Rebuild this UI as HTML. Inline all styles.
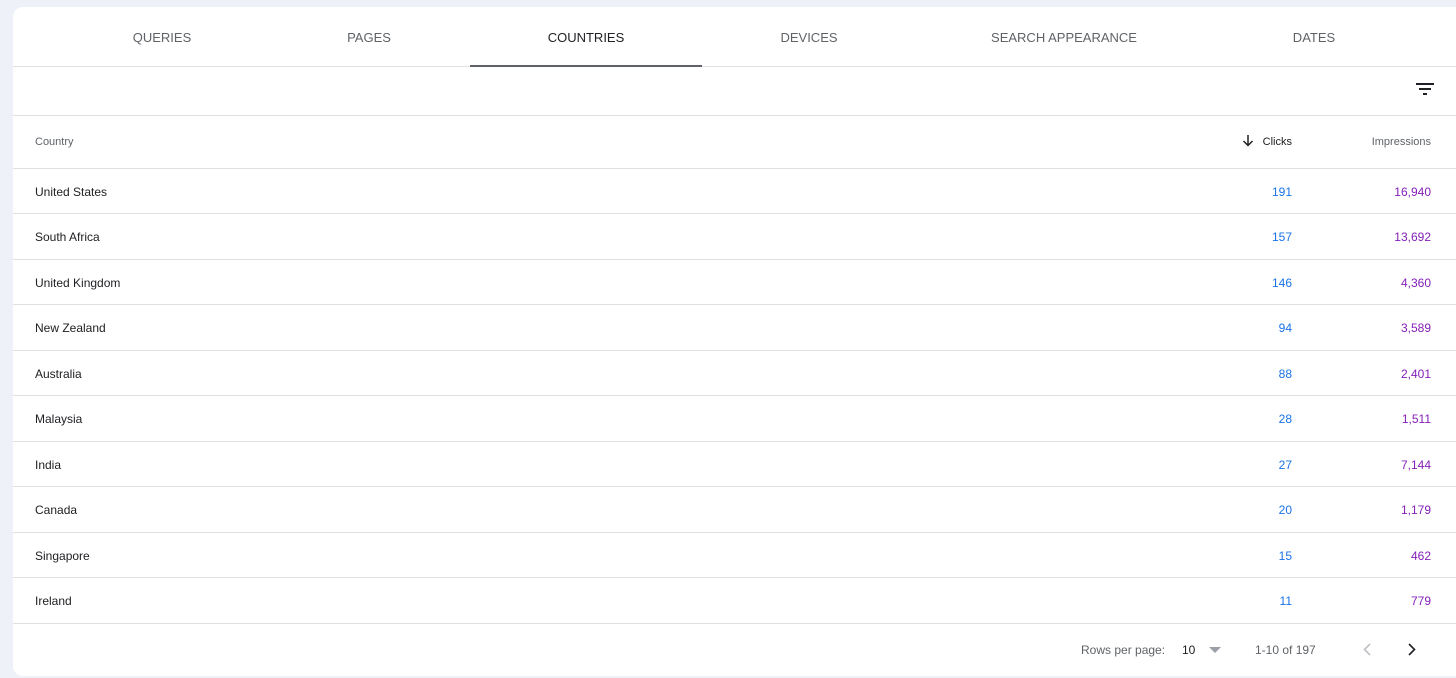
<!DOCTYPE html>
<html><head><style>
*{margin:0;padding:0;box-sizing:border-box}
body{width:1456px;height:678px;background:#eef2f8;font-family:"Liberation Sans",Arial,sans-serif;position:relative;overflow:hidden}
.card{position:absolute;left:13px;top:7px;width:1460px;height:669px;background:#fff;border-radius:10px}
.tab{position:absolute;top:8px;height:60px;line-height:60px;font-size:13px;color:#5f6368;transform:translateX(-50%);white-space:nowrap}
.line{position:absolute;left:13px;right:0;height:1px;background:#e0e0e0}
.row{position:absolute;left:13px;right:0;font-size:12px;color:#202124}
.c1{position:absolute;left:22px}
.c2{position:absolute;right:164px;color:#1a73e8}
.c3{position:absolute;right:25px;color:#8420b8}
</style></head><body>
<div class="card"></div>
<div class="tab" style="left:162px">QUERIES</div>
<div class="tab" style="left:369px">PAGES</div>
<div class="tab" style="left:586px;color:#202124">COUNTRIES</div>
<div class="tab" style="left:809px">DEVICES</div>
<div class="tab" style="left:1064px">SEARCH APPEARANCE</div>
<div class="tab" style="left:1314px">DATES</div>
<div class="line" style="top:66px"></div>
<div style="position:absolute;left:470px;top:65px;width:232px;height:2px;background:#5f6368"></div>
<svg style="position:absolute;left:1416px;top:82px" width="18" height="14"><rect x="0" y="1" width="18" height="2" fill="#202124"/><rect x="3" y="6" width="12" height="2" fill="#202124"/><rect x="7" y="11" width="4" height="2" fill="#202124"/></svg>
<div class="line" style="top:115px"></div>
<div class="row" style="top:136px;font-size:11px;color:#5f6368"><span class="c1">Country</span>
<span style="position:absolute;right:164px;color:#202124">Clicks</span>
<svg style="position:absolute;right:202px;top:-2px" width="12" height="13"><path d="M6 1V11M1.5 7L6 11.5L10.5 7" stroke="#202124" stroke-width="1.5" fill="none"/></svg>
<span class="c3" style="color:#5f6368">Impressions</span></div>
<div class="line" style="top:168px"></div>
<div id="rows"></div>
<script>
var d=[["United States",191,"16,940"],["South Africa",157,"13,692"],["United Kingdom",146,"4,360"],["New Zealand",94,"3,589"],["Australia",88,"2,401"],["Malaysia",28,"1,511"],["India",27,"7,144"],["Canada",20,"1,179"],["Singapore",15,"462"],["Ireland",11,"779"]];
var h="";d.forEach(function(r,i){var t=168+i*45.5;h+='<div class="row" style="top:'+(t+16.5)+'px"><span class="c1">'+r[0]+'</span><span class="c2">'+r[1]+'</span><span class="c3">'+r[2]+'</span></div><div class="line" style="top:'+(t+45)+'px"></div>';});
document.getElementById("rows").innerHTML=h;
</script>
<div style="position:absolute;top:643px;left:1081px;font-size:12px;color:#5f6368">Rows per page:</div>
<div style="position:absolute;top:643px;left:1182px;font-size:12px;color:#202124">10</div>
<svg style="position:absolute;left:1209px;top:647px" width="12" height="6"><path d="M0 0H12L6 6Z" fill="#9aa0a6"/></svg>
<div style="position:absolute;top:643px;left:1255px;font-size:12px;color:#5f6368">1-10 of 197</div>
<svg style="position:absolute;left:1362px;top:643px" width="10" height="13"><path d="M8 1L2.5 6.5L8 12" stroke="#bdc1c6" stroke-width="1.6" fill="none"/></svg>
<svg style="position:absolute;left:1407px;top:643px" width="10" height="13"><path d="M2 1L7.5 6.5L2 12" stroke="#202124" stroke-width="1.6" fill="none"/></svg>
</body></html>
